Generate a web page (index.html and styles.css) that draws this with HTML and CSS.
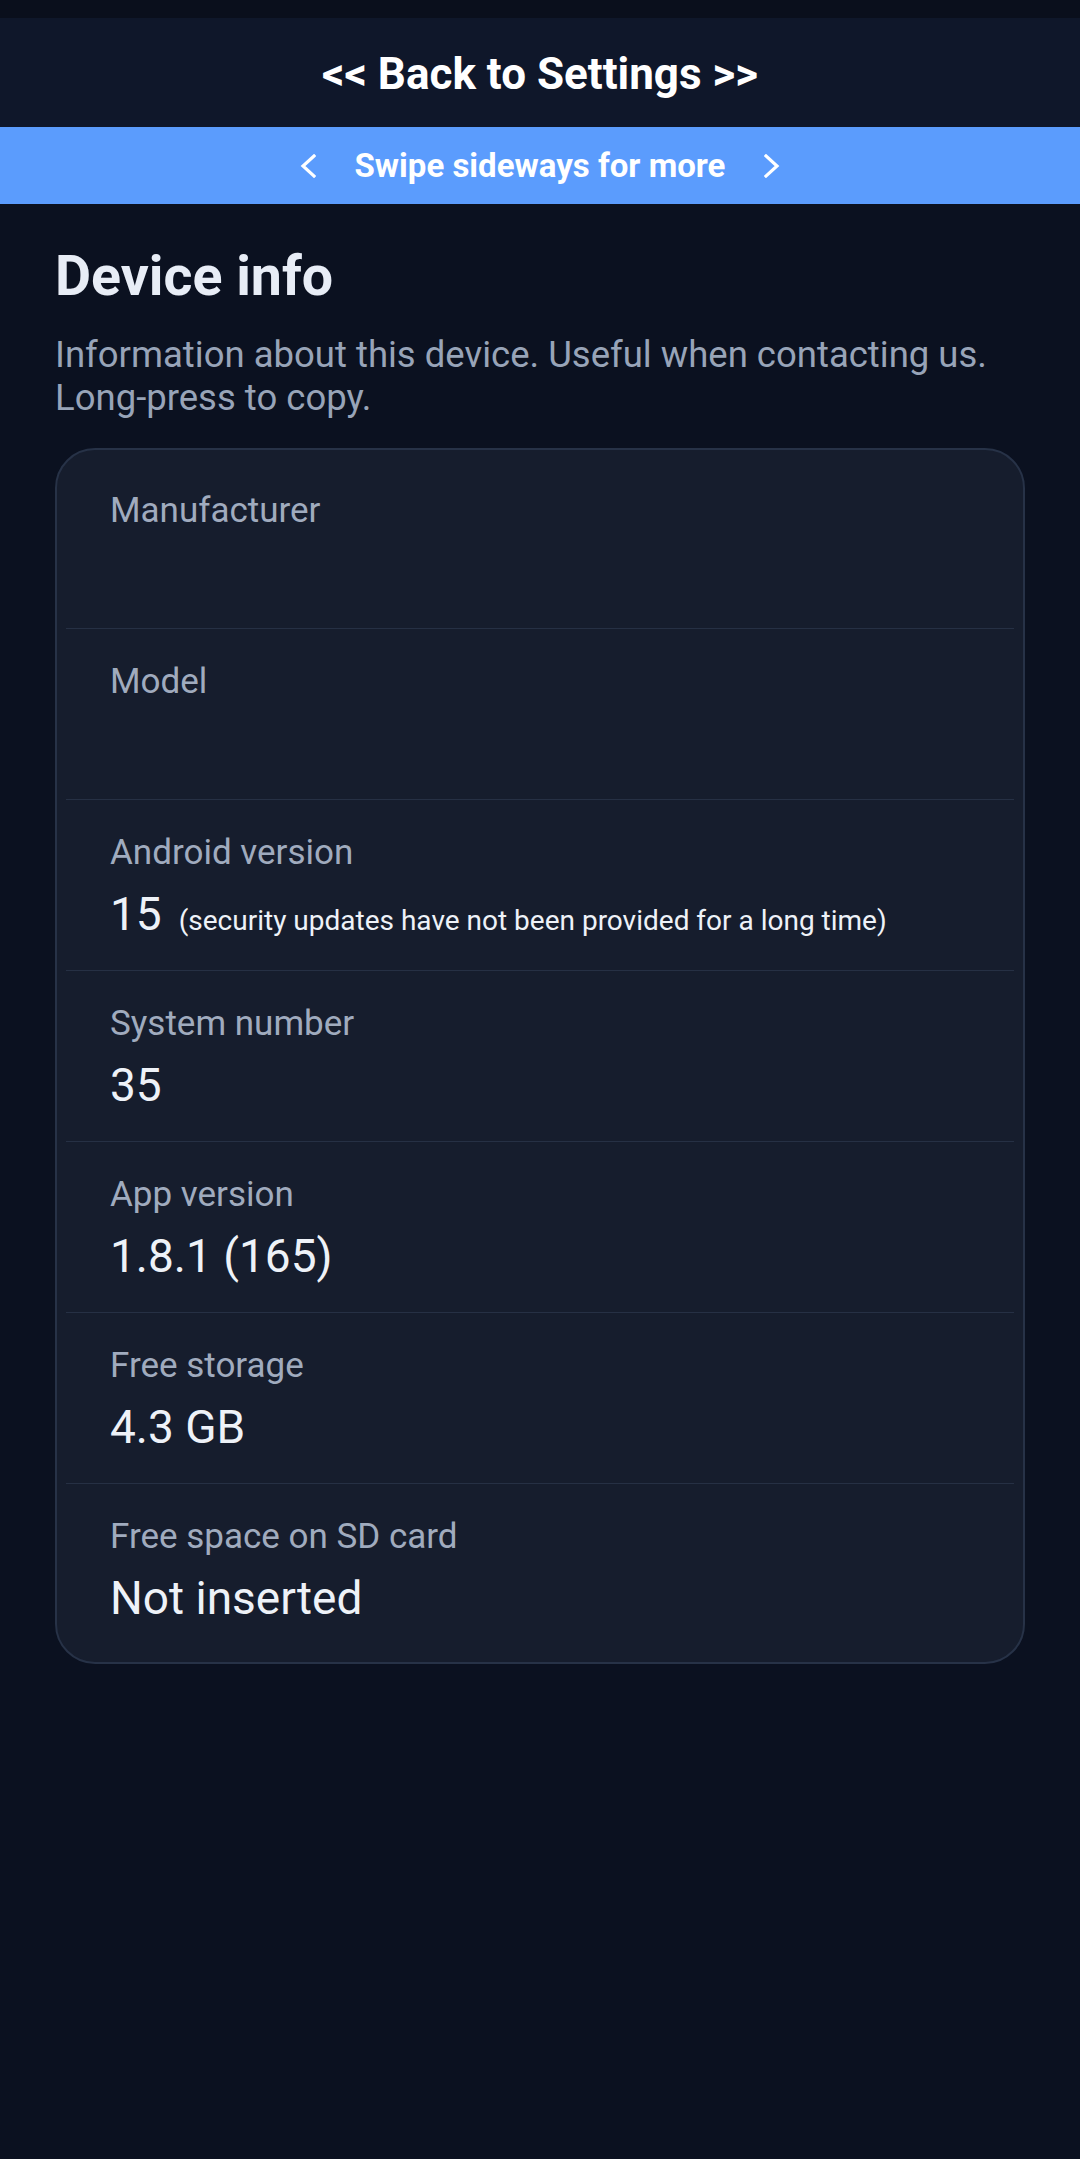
FILE: index.html
```html
<!DOCTYPE html>
<html lang="en">
<head>
<meta charset="utf-8">
<meta name="viewport" content="width=1080">
<title>Device info</title>
<link rel="stylesheet" href="styles.css">
</head>
<body>
<div class="statusbar"></div>
<header class="topbar">&lt;&lt; Back to Settings &gt;&gt;</header>
<div class="banner">
  <svg class="chev" viewBox="0 0 16 24" width="16" height="24" aria-hidden="true"><path d="M14 2 L3 12 L14 22" fill="none" stroke="#ffffff" stroke-width="3.2" stroke-linecap="square" stroke-linejoin="miter"/></svg>
  <span class="banner-text">Swipe sideways for more</span>
  <svg class="chev" viewBox="0 0 16 24" width="16" height="24" aria-hidden="true"><path d="M2 2 L13 12 L2 22" fill="none" stroke="#ffffff" stroke-width="3.2" stroke-linecap="square" stroke-linejoin="miter"/></svg>
</div>
<main class="content">
  <h1 class="title">Device info</h1>
  <p class="subtitle">Information about this device. Useful when contacting us. Long-press to copy.</p>
  <section class="card">
    <div class="row"><div class="label">Manufacturer</div><div class="value">&nbsp;</div></div>
    <div class="row"><div class="label">Model</div><div class="value">&nbsp;</div></div>
    <div class="row"><div class="label">Android version</div><div class="value">15<span class="note">(security updates have not been provided for a long time)</span></div></div>
    <div class="row"><div class="label">System number</div><div class="value">35</div></div>
    <div class="row"><div class="label">App version</div><div class="value">1.8.1 (165)</div></div>
    <div class="row"><div class="label">Free storage</div><div class="value">4.3 GB</div></div>
    <div class="row"><div class="label">Free space on SD card</div><div class="value">Not inserted</div></div>
  </section>
</main>
</body>
</html>
```
FILE: styles.css
```css
* { box-sizing: border-box; }
html, body {
  margin: 0;
  padding: 0;
  background: #0b1120;
  font-family: Roboto, "Noto Sans", "Liberation Sans", sans-serif;
  min-height: 2159px;
}
.statusbar {
  height: 18px;
  background: #0a0f1c;
}
.topbar {
  height: 109px;
  padding-top: 2px;
  background: #0f172a;
  color: #ffffff;
  font-size: 44px;
  font-weight: 700;
  display: flex;
  align-items: center;
  justify-content: center;
}
.banner {
  height: 77px;
  background: #5b9cfd;
  color: #ffffff;
  display: flex;
  align-items: center;
  justify-content: center;
  gap: 39px;
}
.banner-text {
  font-size: 33px;
  font-weight: 700;
}
.chev { display: block; }
.content {
  padding: 0 55px;
}
.title {
  margin: 41px 0 0;
  font-size: 55.5px;
  line-height: 64px;
  font-weight: 700;
  color: #e8edf6;
}
.subtitle {
  margin: 24px 0 0;
  font-size: 36.5px;
  line-height: 43px;
  color: #98a4b8;
}
.card {
  margin-top: 29px;
  background: #161d2d;
  border: 2px solid #273247;
  border-radius: 40px;
  padding: 8px 9px;
}
.row {
  padding: 31px 44px 28px;
  border-bottom: 1px solid #263044;
}
.row:last-child { border-bottom: none; }
.label {
  font-size: 35px;
  line-height: 43px;
  color: #a0abbe;
}
.value {
  margin-top: 12px;
  font-size: 46px;
  line-height: 56px;
  color: #eef2f8;
}
.note {
  font-size: 28px;
  line-height: 1;
  margin-left: 17px;
  color: #eef2f8;
}
```
